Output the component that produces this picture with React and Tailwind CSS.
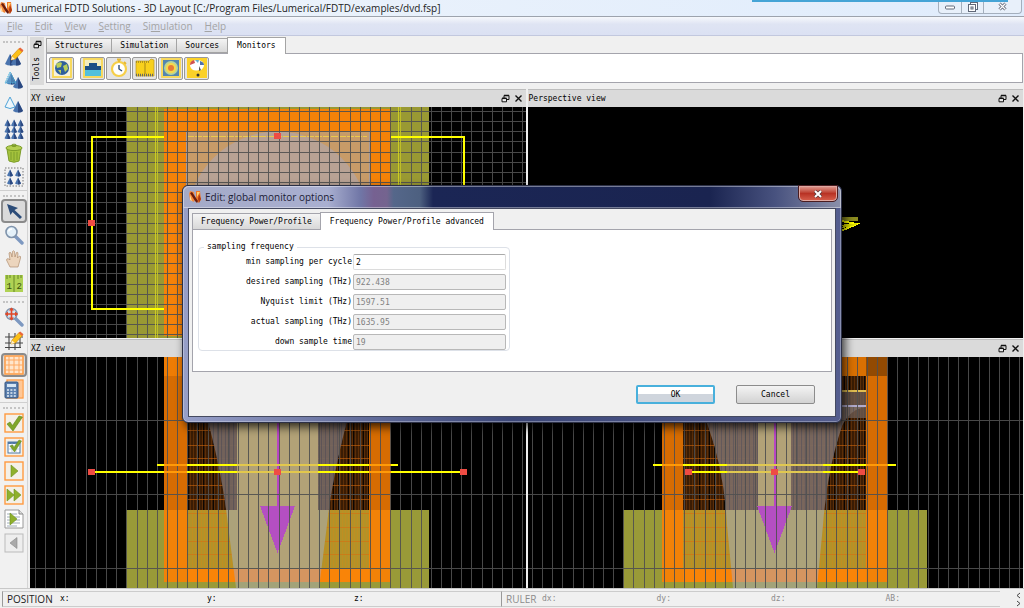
import React from "react";

const MONO = "font-['DejaVu_Sans_Mono',monospace] text-[8px] leading-[10px]";
const SANS = "font-['Open_Sans',sans-serif] text-[10px] leading-[14px]";

const range = (start, end, step) => {
  const out = [];
  for (let v = start; v < end; v += step) out.push(Math.round(v));
  return out;
};

function Logo() {
  return (
    <svg className="h-3 w-3 shrink-0" viewBox="0 0 12 12" aria-hidden="true">
      <path d="M1 0L5 1L6 8L5 11L1 9L0 3Z" fill="#f58a3c" />
      <path d="M7 0L11 0L12 9L9 12L7 7Z" fill="#f07828" />
      <path d="M1 2L3 1L9 10L8 12L6 10Z" fill="#6a1c0c" />
      <path d="M10 3L12 8L10 12L9 8Z" fill="#b03810" />
      <path d="M1 4L3 10L1 9Z" fill="#ffe0a0" />
      <path d="M8 1L11 1L8 6Z" fill="#ffd070" />
    </svg>
  );
}

function RestoreIcon() {
  return (
    <svg className="h-[9px] w-[9px]" viewBox="0 0 9 9" fill="none" stroke="#111" aria-hidden="true">
      <path d="M3 4V1.5H8V5.5H6" />
      <path d="M3 1.5H8" strokeWidth="1.5" />
      <path d="M1 4.5H5.5V7.8H1Z" fill="#eee" />
      <path d="M1 4.3H5.5" strokeWidth="1.5" />
    </svg>
  );
}

function CloseIcon() {
  return (
    <svg className="h-[9px] w-[9px]" viewBox="0 0 9 9" stroke="#111" strokeWidth="1.4" aria-hidden="true">
      <path d="M1.5 1.5L7.5 7.5M7.5 1.5L1.5 7.5" />
    </svg>
  );
}

function Cone({ x, y, s = 1, outline }) {
  const t = `translate(${x} ${y}) scale(${s})`;
  return outline ? (
    <path transform={t} d="M5 0L10 10Q5 13 0 10Z" fill="#eef6fb" stroke="#4fa3d8" />
  ) : (
    <g transform={t}>
      <path d="M5 0L10 10Q5 13 0 10Z" fill="#4a74ae" />
      <path d="M5 0L10 10Q8 12 5 11.5Z" fill="#2b4880" />
    </g>
  );
}

function Pencil() {
  return (
    <g>
      <path d="M7 13L8 9L15 1.5L18.5 4.500L11.5 12Z" fill="#fbc018" stroke="#c98208" strokeWidth=".6" />
      <path d="M14.500 2L16.2 .6L19.5 3.3L18 5Z" fill="#e8663c" />
      <path d="M7 13L8 9.500L11 12Z" fill="#fff0c8" />
    </g>
  );
}

function GreenArrow({ x = 7, y = 5 }) {
  return <path d={`M${x} ${y - 1}L${x + 7} ${y + 5}L${x} ${y + 11}Z`} fill="#8fb02c" stroke="#6d9020" strokeWidth=".6" />;
}

const frame = <rect x="1" y="1" width="18" height="18" fill="#f4f0e8" stroke="#ff9a40" strokeWidth="1.4" />;

const icons = {
  edit: <g><Cone x={1} y={7} /><Cone x={7} y={7} /><Pencil /></g>,
  group: <g><Cone x={2} y={2} /><Cone x={9} y={6} /><path d="M6 1L12 12L1 12Z" fill="#6ab6dd" fillOpacity=".5" stroke="#4eb4dd" strokeDasharray="1.5 1" /></g>,
  ungroup: <g><Cone x={1} y={2} outline /><Cone x={9} y={6} /></g>,
  array: <g>{[0, 1, 2].map((r) => [0, 1, 2].map((c) => <Cone key={`${r}${c}`} x={0.5 + c * 6.5} y={0.5 + r * 6.4} s={0.6} />))}</g>,
  trash: <g><path d="M3 6L5 18Q10 20.5 15 18L17 6Q10 9 3 6Z" fill="#a4c23c" stroke="#7c9c28" /><ellipse cx="10" cy="5" rx="8" ry="2.6" fill="#b5cf52" stroke="#7c9c28" /><path d="M7 9V17M10 9V18M13 9V17" stroke="#7d9e2c" /><ellipse cx="10" cy="2.4" rx="2.5" ry="1.2" fill="none" stroke="#7c9c28" /></g>,
  select: <g><rect x="1" y="1" width="18" height="18" fill="none" stroke="#777" strokeDasharray="1.5 1.5" /><Cone x={3} y={2.5} s={0.6} /><Cone x={11} y={2.5} s={0.6} /><Cone x={3} y={10.5} s={0.6} /><Cone x={11} y={10.5} s={0.6} /></g>,
  pointer: <path d="M3 3L14 7L10.5 9L18 16L16 18L8.5 11L6.500 14Z" fill="#2c4c78" />,
  zoom: <g><path d="M11 11L18 18" stroke="#7d98c0" strokeWidth="3.4" strokeLinecap="round" /><circle cx="7.5" cy="7" r="5.5" fill="#e4f1fa" stroke="#8094ac" strokeWidth="1.6" /><path d="M4.5 6.5Q5 4 8 4" fill="none" stroke="#fff" strokeWidth="1.4" /></g>,
  hand: <path d="M6 18L2.5 11Q2.5 9 5 10L6 11L5 4Q6 2.5 7 4L8 8L8.5 2.5Q9.5 1 10.5 2.5L11 8L12.5 3.5Q14 2.5 14 5L13.5 9L15.5 7Q17 7 16.5 9L14 18Z" fill="#ecd5bd" stroke="#b08e70" strokeWidth=".7" />,
  ruler: (
    <g>
      <rect x="1" y="2" width="18" height="17" fill="#b0d254" />
      <path d="M3 2V6M6 2V5M10 2V19M14 2V6M17 2V5" stroke="#54721c" strokeWidth=".8" />
      <text x="2.5" y="16" fontSize="9" fontFamily="Liberation Mono, monospace" fill="#38500c">1</text>
      <text x="12.5" y="16" fontSize="9" fontFamily="Liberation Mono, monospace" fill="#38500c">2</text>
    </g>
  ),
  extents: <g><path d="M11 11L18 18" stroke="#7d98c0" strokeWidth="3.4" strokeLinecap="round" /><circle cx="7.5" cy="7" r="5.5" fill="#cfe3f2" stroke="#8094ac" strokeWidth="1.4" /><path d="M7.5 1V13M1.5 7H13.5" stroke="#e04828" strokeWidth="1.6" /><path d="M5 3.500L7.5 .5L10 3.500ZM5 10.500L7.5 13.5L10 10.500ZM4 4.500L1 7L4 9.500ZM11 4.500L14 7L11 9.500Z" fill="#e04828" /></g>,
  drawGrid: <g><path d="M5 2V19M11 2V19M16 4V17M1 6H19M1 12H19M1 16.500H17" stroke="#444" strokeWidth="1.1" /><Pencil /></g>,
  mesh: <g><rect x="1" y="1" width="18" height="18" fill="#ffe6cc" stroke="#ff9a40" strokeWidth="1.5" /><path d="M5 1V19M10 1V19M15 1V19M1 5H19M1 10H19M1 15H19" stroke="#ffa860" strokeWidth="1" /></g>,
  calc: <g><rect x="3" y="1" width="16" height="18" fill="#ffe6cc" stroke="#ff9a40" strokeWidth="1.3" /><path d="M15 1V19M17 1V19" stroke="#ffa860" /><rect x="1" y="3" width="13" height="16" rx="1" fill="#5a7fae" stroke="#34557f" /><rect x="3" y="5" width="9" height="3" fill="#d6e6f4" /><path d="M3 11H12M3 14H12M3 17H12" stroke="#e4edf5" strokeWidth="1.7" strokeDasharray="2 1.4" /></g>,
  check: <g>{frame}<path d="M3 11L6 9L8.5 12.5L15 3L18.500 4L9 18Z" fill="#7fa62a" stroke="#5f8518" strokeWidth=".6" /></g>,
  checkTable: <g>{frame}<rect x="4" y="5" width="12" height="11" fill="#fff" stroke="#4f78a5" /><path d="M4 6H16" stroke="#4f78a5" strokeWidth="2" /><path d="M4 9H16M4 12H16M8 6V16M12 6V16" stroke="#9ab4cf" strokeWidth=".6" /><path d="M6 9L8.5 8L10 10.5L15 3L17.5 4L10.5 15Z" fill="#7fa62a" stroke="#5f8518" strokeWidth=".5" /></g>,
  run: <g>{frame}<GreenArrow /></g>,
  fastRun: <g>{frame}<GreenArrow x={3} /><GreenArrow x={10} /></g>,
  script: <g><path d="M1 1H15L19 5V19H1Z" fill="#fff" stroke="#999" /><path d="M15 1V5H19" fill="#ddd" stroke="#888" /><path d="M3 5H13M3 8H16M3 11H16M3 14H16M3 17H13" stroke="#8898a8" strokeWidth=".8" /><GreenArrow x={6} /></g>,
  back: <g><rect x="1" y="1" width="18" height="18" fill="#eee" stroke="#bbb" /><path d="M13 4.5L6 10L13 15.5Z" fill="#aaa" stroke="#888" strokeWidth=".6" /></g>,
};

const toolGroups = [
  [["edit", "Edit object"], ["group", "Group"], ["ungroup", "Ungroup"], ["array", "Array"], ["trash", "Delete"], ["select", "Select all"]],
  [["pointer", "Select"], ["zoom", "Zoom"], ["hand", "Pan"], ["ruler", "Ruler"]],
  [["extents", "Zoom extent"], ["drawGrid", "Edit grid"], ["mesh", "View mesh"], ["calc", "Calculate mesh"]],
  [["check", "Check"], ["checkTable", "Resources"], ["run", "Run"], ["fastRun", "Run parallel"], ["script", "Run script"], ["back", "Back"]],
];
const pressed = ["pointer", "mesh"];

function SideToolbar() {
  return (
    <aside className="w-7 shrink-0 border-r border-[#d4d4d4] bg-[#f1f1f1]">
      {toolGroups.map((group, g) => (
        <div key={g} className={g ? "mt-px border-t border-[#cfcfcf]" : "border-t border-transparent"}>
          <div className="mx-[3px] mt-1 mb-[2px] h-[2px] border-t-2 border-dotted border-[#c4c4c4]" />
          {group.map(([id, label]) => (
            <button
              key={id}
              type="button"
              aria-label={label}
              className={
                pressed.includes(id)
                  ? "ml-px flex h-6 w-[26px] items-center justify-center rounded border-2 border-[#8b8b8b] bg-[#dadada]"
                  : "ml-px flex h-6 w-[26px] items-center justify-center"
              }
            >
              <svg className="h-5 w-5 shrink-0" viewBox="0 0 20 20">{icons[id]}</svg>
            </button>
          ))}
        </div>
      ))}
    </aside>
  );
}

const yellowFrame = <rect x="1" y="1" width="18" height="18" fill="#f5f2dc" stroke="#f8d650" strokeWidth="1.8" />;
const monitors = [
  ["Global options", <g>{yellowFrame}<circle cx="10" cy="10" r="7" fill="#2e5f9c" /><path d="M4 6Q8 3 10 5L9 9L5 10ZM11 8L15 6L16 11L13 14ZM6 12L9 12L9 16Z" fill="#b9cf5a" /></g>],
  ["Index", <g>{yellowFrame}<rect x="2" y="2" width="16" height="16" fill="#f3ecc0" /><path d="M2 8H6V5H14V8H18V12H2Z" fill="#1d4f86" /><rect x="2" y="12" width="16" height="6" fill="#52c0dc" /></g>],
  ["Time", <g><circle cx="10" cy="11" r="7" fill="#fff" stroke="#f6cf48" strokeWidth="2.2" /><path d="M8 1.5H12M10 2V4M15 4L17 6" stroke="#e6b830" strokeWidth="1.8" /><path d="M10 7V11L13 13" fill="none" stroke="#2f4e78" strokeWidth="1.4" /></g>],
  ["Movie", <g><path d="M1 3H14L16 1L19 2V18H1Z" fill="#f8d01c" stroke="#bb9a20" strokeWidth=".7" /><path d="M1 17H18" stroke="#666" strokeWidth="2.5" strokeDasharray="1 1" /><path d="M1 4H14" stroke="#998020" strokeWidth="1.500" strokeDasharray="1 1" /><path d="M10 5V16" stroke="#a78614" /></g>],
  ["Frequency profile", <g>{yellowFrame}<rect x="2" y="2" width="16" height="16" fill="#5486b0" /><circle cx="10" cy="10" r="7" fill="#b7d49a" /><circle cx="10" cy="10" r="5.2" fill="#f6d84c" /><circle cx="10" cy="10" r="3" fill="#e67a38" /></g>],
  ["Mode expansion", <g><rect x="0" y="0" width="20" height="20" fill="#fbd128" /><path d="M3 8Q3 2 10 2Q17 2 17 8Q15 13 12 12Q5 14 3 8Z" fill="#fff" /><path d="M3 7Q3 3 7 2L8 5Z" fill="#d05050" /><path d="M13 3Q17 4 17 7L13 7Z" fill="#4f72ac" /><path d="M8 2H12L11 5Z" fill="#64b0d0" /><path d="M12 8L14 12L12 13Z" fill="#555" /><circle cx="11" cy="17" r="1.5" fill="#333" /></g>],
];

function ToolsPanel() {
  const tab = `${MONO} -mr-px border border-[#a4a4a4] bg-linear-to-b from-[#f4f4f4] to-[#d8d8d8] h-[15px] px-2 text-black`;
  return (
    <section className="flex h-[53px] shrink-0 pt-px pl-px">
      <div className="flex h-12 w-[14px] flex-col items-center gap-2 bg-[#dadada] pt-[3px]">
        <button type="button" aria-label="Undock tools"><RestoreIcon /></button>
        <span className={`${MONO} rotate-180 text-black [writing-mode:vertical-rl]`}>Tools</span>
      </div>
      <div className="ml-[2px] min-w-0 flex-1 pr-px pt-px">
        <div className="flex h-[15px] items-end" role="tablist">
          <button type="button" role="tab" className={tab}>Structures</button>
          <button type="button" role="tab" className={tab}>Simulation</button>
          <button type="button" role="tab" className={tab}>Sources</button>
          <button type="button" role="tab" aria-selected="true" className={`${MONO} relative z-10 -mb-px h-[17px] border border-b-0 border-[#a4a4a4] bg-white px-[9px] text-black`}>Monitors</button>
        </div>
        <div className="flex h-[30px] items-center border border-[#a4a4ac] bg-white px-[2px]">
          {monitors.map(([label, art], i) => (
            <button
              key={label}
              type="button"
              aria-label={label}
              className={
                i === 0
                  ? "mr-[6px] flex h-[23px] w-[25px] items-center justify-center rounded-xs border border-[#999] bg-[#e4e4e4]"
                  : "mr-px flex h-[23px] w-[25px] items-center justify-center rounded-xs border border-[#999] bg-[#e4e4e4]"
              }
            >
              <svg className="h-5 w-5 shrink-0" viewBox="0 0 20 20">{art}</svg>
            </button>
          ))}
        </div>
      </div>
    </section>
  );
}

function Handle({ x, y }) {
  return <rect x={x - 3} y={y - 3} width="7" height="6" fill="#ee4c44" />;
}

function Canvas({ viewBox, children }) {
  return (
    <svg className="block min-h-0 w-full flex-1 bg-black" viewBox={viewBox} preserveAspectRatio="xMinYMin slice" aria-hidden="true" shapeRendering="crispEdges">
      {children}
    </svg>
  );
}

function Grid({ xs, ys, x0, x1, y0, y1 }) {
  return (
    <g stroke="#505050" opacity=".9">
      {xs.map((x) => <path key={`v${x}`} d={`M${x + 0.5} ${y0}V${y1}`} />)}
      {ys.map((y) => <path key={`h${y}`} d={`M${x0} ${y + 0.5}H${x1}`} />)}
    </g>
  );
}

function XYCanvas() {
  return (
    <Canvas viewBox="30 107 496 231">
      <rect x="126" y="107" width="303" height="231" fill="#999933" />
      <rect x="164" y="109" width="227" height="227" fill="#f58208" />
      <rect x="186" y="131" width="183" height="183" fill="#c79b68" stroke="#a59a9c" />
      <circle cx="277.5" cy="222.5" r="91" fill="#b8a294" shapeRendering="auto" />
      <path d="M187 136.500H367" stroke="#ecc94c" strokeDasharray="7 1" />
      <Grid xs={range(35, 526, 10.15)} ys={range(111, 338, 10.15)} x0={30} x1={526} y0={107} y1={338} />
      <path d="M155.500 107V338M157.500 107V338M398.500 107V338M400.500 107V338" stroke="#d8d820" opacity=".8" />
      <path d="M164 137H92V309H164M391 137H464V309H391" fill="none" stroke="#ffff00" strokeWidth="2" />
      <Handle x={277} y={136} />
      <Handle x={91} y={223} />
    </Canvas>
  );
}

function PerspectiveCanvas() {
  return (
    <Canvas viewBox="528 107 496 231">
      <path d="M836 217H858V221L836 222Z" fill="#8c8c20" />
      <path d="M836 220L857 224L836 233" fill="none" stroke="#ffff00" strokeWidth="2" />
      <path d="M836 226L857 224L836 229" fill="none" stroke="#e0e000" strokeWidth="1.5" />
    </Canvas>
  );
}

const cross = { y0: 357, y1: 588 };
const fineLines = [430, 445, 458, 485, 499, 513, 527, 541, 554];

function SideWall({ x, w, top }) {
  return (
    <g>
      <rect x={x} y="357" width={w} height="19" fill={top} />
      <rect x={x} y="376" width={w} height="134" fill="#d66c02" />
      <rect x={x} y="510" width={w} height="72" fill="#f28208" />
    </g>
  );
}

function MeshFill({ x, w }) {
  return (
    <g>
      <rect x={x} y="357" width={w} height="19" fill="#d97002" />
      <rect x={x} y="376" width={w} height="134" fill="#3a1c04" />
      <path d={range(x + 1, x + w, 5).map((v) => `M${v + 0.5} 376V510`).join("")} stroke="#0c0602" strokeWidth="1" />
      <path d={range(x + 3, x + w, 3).map((v) => `M${v + 0.5} 376V510`).join("")} stroke="#5c2e08" strokeWidth="1" />
      <rect x={x} y="510" width={w} height="59" fill="#b39228" />
      <path d={range(x + 2, x + w, 3).map((v) => `M${v + 0.5} 510V569`).join("")} stroke="#c58d20" opacity=".7" />
      <rect x={x} y="569" width={w} height="13" fill="#f98408" />
      <path d={fineLines.map((y) => `M${x} ${y + 0.5}H${x + w}`).join("")} stroke="#d86c10" opacity=".55" />
    </g>
  );
}

function Arrow({ x }) {
  return (
    <g>
      <path d={`M${x + 0.5} 400V508`} stroke="#b846c4" strokeWidth="2" />
      <path d={`M${x - 17} 506H${x + 18}L${x + 0.5} 553Z`} fill="#b44fc2" />
    </g>
  );
}

function XZCanvas() {
  return (
    <Canvas viewBox="30 357 496 231">
      <rect x="126" y="510" width="303" height="78" fill="#999a38" />
      <MeshFill x={187} w={182} />
      <clipPath id="xzLens"><path d="M195 376Q221 460 228 525L236 588H319L327 525Q334 460 360 376Z" /></clipPath>
      <g clipPath="url(#xzLens)">
        <rect x="187" y="357" width="182" height="153" fill="#75665f" opacity=".95" />
        <path d={range(189, 368, 4).map((v) => `M${v + 0.5} 376V510`).join("")} stroke="#504c55" opacity=".6" />
        <rect x="187" y="510" width="182" height="59" fill="#aca27a" />
        <rect x="187" y="569" width="182" height="13" fill="#d59560" />
        <rect x="187" y="582" width="182" height="6" fill="#a2a379" />
      </g>
      <rect x="237" y="376" width="81" height="193" fill="#b2a277" />
      <SideWall x={164} w={23} top="#ee7c04" />
      <SideWall x={369} w={22} top="#ee7c04" />
      <Arrow x={277} />
      <Grid xs={range(35, 526, 10.15)} ys={[420, 494, 568]} x0={30} x1={526} {...cross} />
      <path d="M157 465H398M91 472H463" stroke="#ffff00" strokeWidth="2" />
      <path d="M237 465H318M237 472H318" stroke="#e2c84c" strokeWidth="2" />
      <path d="M164 465H187M164 472H187M369 465H391M369 472H391" stroke="#ff9a08" strokeWidth="2" />
      <Handle x={91} y={472} />
      <Handle x={277} y={472} />
      <Handle x={463} y={472} />
    </Canvas>
  );
}

function YZCanvas() {
  return (
    <Canvas viewBox="528 357 496 231">
      <rect x="623" y="510" width="304" height="78" fill="#999a38" />
      <MeshFill x={683} w={183} />
      <clipPath id="yzLens"><path d="M683 407Q702 410 708 426Q724 470 727 525L733 588H817L823 525Q827 470 842 426Q850 409 866 407Z" /></clipPath>
      <rect x="683" y="392" width="183" height="26" fill="#6e5c54" opacity=".8" />
      <g clipPath="url(#yzLens)">
        <rect x="683" y="400" width="183" height="110" fill="#7b6a62" opacity=".95" />
        <path d={range(685, 866, 4).map((v) => `M${v + 0.5} 400V510`).join("")} stroke="#55505a" opacity=".6" />
        <rect x="683" y="510" width="183" height="59" fill="#aca27a" />
        <rect x="683" y="569" width="183" height="13" fill="#d59560" />
        <rect x="683" y="582" width="183" height="6" fill="#a2a379" />
      </g>
      <rect x="758" y="376" width="33" height="130" fill="#b2a277" />
      <path d="M683 391H866" stroke="#e0bd50" strokeWidth="2" />
      <path d="M683 406H866" stroke="#b0aacb" strokeWidth="2" />
      <SideWall x={662} w={21} top="#924a02" />
      <SideWall x={866} w={22} top="#924a02" />
      <Arrow x={774} />
      <Grid xs={range(532, 1024, 10.15)} ys={[420, 494, 568]} x0={528} x1={1024} {...cross} />
      <path d="M653 465H896M687 472H861" stroke="#ffff00" strokeWidth="2" />
      <path d="M727 465H823M727 472H823" stroke="#e0c850" strokeWidth="2" />
      <path d="M662 465H683M866 465H888" stroke="#ff9a08" strokeWidth="2" />
      <Handle x={688} y={472} />
      <Handle x={774} y={472} />
      <Handle x={861} y={472} />
    </Canvas>
  );
}

function View({ title, children }) {
  return (
    <section className="flex min-h-0 min-w-0 flex-col">
      <header className="flex h-[18px] shrink-0 items-center border-t border-[#bdbdbd] bg-[#dadada] pr-[3px] pl-px">
        <h2 className={`${MONO} flex-1 text-black`}>{title}</h2>
        <button type="button" aria-label={`Undock ${title}`} className="mr-1"><RestoreIcon /></button>
        <button type="button" aria-label={`Close ${title}`}><CloseIcon /></button>
      </header>
      {children}
    </section>
  );
}

const fields = [
  ["min", "min sampling per cycle", "2", false],
  ["desired", "desired sampling (THz)", "922.438", true],
  ["nyquist", "Nyquist limit (THz)", "1597.51", true],
  ["actual", "actual sampling (THz)", "1635.95", true],
  ["down", "down sample time", "19", true],
];

function Dialog() {
  return (
    <div
      role="dialog"
      aria-label="Edit: global monitor options"
      className="absolute top-[185px] left-[182px] w-[660px] rounded-md border border-[#2c3046] bg-[#59618c] bg-linear-to-r from-[#979fc8] via-[#3c4778] via-50% to-[#545d8e] px-[5px] pb-[5px] shadow-[3px_4px_10px_rgba(0,0,0,0.75)] ring-1 ring-white/30 ring-inset"
    >
      <header className="-mx-[5px] flex h-[22px] items-start rounded-t-md bg-[linear-gradient(90deg,#a4aac8_0%,#a9afd0_22%,#7076a6_27%,#766191_29%,#74648f_31%,#55678a_32%,#4d6080_36%,#1b2655_38%,#1a2450_80%,#48527f_90%,#8b90aa_100%)] pl-[6px] ring-1 ring-white/40 ring-inset">
        <div className="flex h-[22px] items-center gap-1">
          <Logo />
          <h1 className={`${SANS} text-[#1c2036]`}>Edit: global monitor options</h1>
        </div>
        <button type="button" aria-label="Close dialog" className="mr-1 ml-auto flex h-[15px] w-[38px] items-center justify-center rounded-b border border-[#e0a8a0] bg-linear-to-b from-[#dc9087] via-[#b83224] via-50% to-[#d45a48] outline outline-[#4a1c20]">
          <svg className="h-2 w-[10px]" viewBox="0 0 10 8" aria-hidden="true">
            <path d="M2 1L8 7M8 1L2 7" stroke="#5a3838" strokeWidth="3.4" />
            <path d="M2 1L8 7M8 1L2 7" stroke="#fff" strokeWidth="2" />
          </svg>
        </button>
      </header>
      <div className="border border-[#454a60] bg-[#f0f0f0] px-[3px] pt-[3px] pb-3">
        <div className="flex h-[17px] items-end" role="tablist">
          <button type="button" role="tab" className={`${MONO} h-4 border border-b-0 border-[#a4a4ac] bg-linear-to-b from-[#f4f4f4] to-[#d8d8d8] px-2 text-black`}>Frequency Power/Profile</button>
          <button type="button" role="tab" aria-selected="true" className={`${MONO} relative -mb-px -ml-px h-[18px] border border-b-0 border-[#a4a4ac] bg-white px-[9px] text-black`}>Frequency Power/Profile advanced</button>
        </div>
        <div className="border border-[#a4a4ac] bg-white px-[5px] pt-3 pb-5" role="tabpanel">
          <fieldset className="w-[312px] rounded-sm border border-[#dde1e8] px-[3px]">
            <legend className={`${MONO} ml-[2px] px-[3px] text-black`}>sampling frequency</legend>
            <div className="flex flex-col gap-1 pt-[2px]">
              {fields.map(([id, label, value, off]) => (
                <div key={id} className="flex h-4 items-center justify-end gap-px">
                  <label htmlFor={id} className={`${MONO} whitespace-nowrap text-black`}>{label}</label>
                  <input
                    id={id}
                    defaultValue={value}
                    disabled={off}
                    className={
                      off
                        ? `${MONO} h-4 w-[153px] rounded-xs border border-[#b8b8b8] bg-[#efefef] px-[2px] text-[#808080]`
                        : `${MONO} h-4 w-[153px] rounded-xs border border-[#dcdcdc] border-t-[#aaaaaa] bg-white px-[2px] text-black`
                    }
                  />
                </div>
              ))}
            </div>
          </fieldset>
        </div>
        <div className="flex justify-end gap-[21px] pt-[13px] pr-[17px]">
          <button type="button" className={`${MONO} h-[19px] w-[79px] rounded-xs border-2 border-[#48b0dc] bg-linear-to-b from-white from-50% to-[#cfd5dd] to-50% text-black`}>OK</button>
          <button type="button" className={`${MONO} h-[19px] w-[79px] rounded-xs border border-[#8c8c8c] bg-linear-to-b from-[#f4f4f4] to-[#d2d2d2] text-black`}>Cancel</button>
        </div>
      </div>
    </div>
  );
}

export default function App() {
  return (
    <main className="relative flex h-screen flex-col overflow-hidden bg-[#f0f0f0]">
      <header className="relative flex h-[17px] shrink-0 items-center gap-1 border-b border-[#9da3ad] bg-linear-to-r from-[#eef4fb] to-[#e0ecfc]">
        <Logo />
        <span className={`${SANS} whitespace-nowrap text-[#222]`}>Lumerical FDTD Solutions - 3D Layout [C:/Program Files/Lumerical/FDTD/examples/dvd.fsp]</span>
        <div className="mr-[2px] ml-auto flex h-[14px] self-start rounded-b border border-t-0 border-[#a4afbd] bg-[#e8f0fa]">
          <button type="button" aria-label="Minimize" className="flex w-[23px] items-center justify-center border-r border-[#a4afbd]">
            <svg className="h-2 w-[10px]" viewBox="0 0 10 8" aria-hidden="true"><rect x=".5" y="3" width="9" height="3" rx="1" fill="#fff" stroke="#606878" /></svg>
          </button>
          <button type="button" aria-label="Restore" className="flex w-[22px] items-center justify-center border-r border-[#a4afbd]">
            <svg className="h-[10px] w-[10px]" viewBox="0 0 10 10" fill="#fff" stroke="#606878" aria-hidden="true"><rect x="2.500" y=".5" width="7" height="7" /><rect x=".5" y="2.500" width="7" height="7" /><rect x="3" y="5" width="2" height="2" /></svg>
          </button>
          <button type="button" aria-label="Close" className="flex w-[37px] items-center justify-center">
            <svg className="h-[9px] w-[9px]" viewBox="0 0 9 9" aria-hidden="true"><path d="M1.500 1.500L7.500 7.500M7.500 1.500L1.500 7.500" stroke="#606878" strokeWidth="3" /><path d="M1.500 1.500L7.500 7.500M7.500 1.500L1.500 7.500" stroke="#fff" strokeWidth="1.200" /></svg>
          </button>
        </div>
        <div className="absolute top-0 right-4 h-[2px] w-1/4 bg-[#45a4d6]" />
      </header>
      <nav className={`${SANS} flex h-[19px] shrink-0 items-center gap-3 border-b border-[#c2c8de] bg-linear-to-b from-[#f6f8fc] via-[#dfe4f3] via-40% to-[#dbe1f3] px-[7px] text-[#a4a4a4]`}>
        {["File", "Edit", "View", "Setting", "Simulation", "Help"].map((name) => (
          <button key={name} type="button">
            {name === "Simulation" ? <>Si<u>m</u>ulation</> : <><u>{name[0]}</u>{name.slice(1)}</>}
          </button>
        ))}
      </nav>
      <div className="flex min-h-0 flex-1">
        <SideToolbar />
        <div className="flex min-w-0 flex-1 flex-col pl-px">
          <ToolsPanel />
          <div className="grid min-h-0 flex-1 grid-cols-2 grid-rows-2 gap-x-[2px] gap-y-px px-px">
            <View title="XY view"><XYCanvas /></View>
            <View title="Perspective view"><PerspectiveCanvas /></View>
            <View title="XZ view"><XZCanvas /></View>
            <View title="YZ view"><YZCanvas /></View>
          </div>
        </div>
      </div>
      <footer className={`${SANS} flex h-5 shrink-0 items-center border-t border-[#c8c8c8] bg-[#f0f0f0] pl-[2px]`}>
        <div className="flex h-4 flex-1 items-center border border-r-0 border-[#ccc] border-l-[#999] pl-1 text-[#222]">
          <span className="w-[53px]">POSITION</span>
          <span className={`${MONO} flex-1 text-black`}>x:</span>
          <span className={`${MONO} flex-1 text-black`}>y:</span>
          <span className={`${MONO} flex-1 text-black`}>z:</span>
        </div>
        <div className="flex h-4 flex-1 items-center border border-r-0 border-[#ccc] border-l-[#999] pl-1 text-[#8c8c8c]">
          <span className="w-9">RULER</span>
          <span className={`${MONO} flex-1`}>dx:</span>
          <span className={`${MONO} flex-1`}>dy:</span>
          <span className={`${MONO} flex-1`}>dz:</span>
          <span className={`${MONO} flex-1`}>AB:</span>
        </div>
        <div className="flex w-6 justify-end pr-[3px]">
          <svg className="h-4 w-[5px]" viewBox="0 0 5 16" fill="none" stroke="#444" aria-hidden="true"><path d="M4 2L1 4.500L4 7M1 10L4 12.500L1 15" /></svg>
        </div>
      </footer>
      <Dialog />
    </main>
  );
}
